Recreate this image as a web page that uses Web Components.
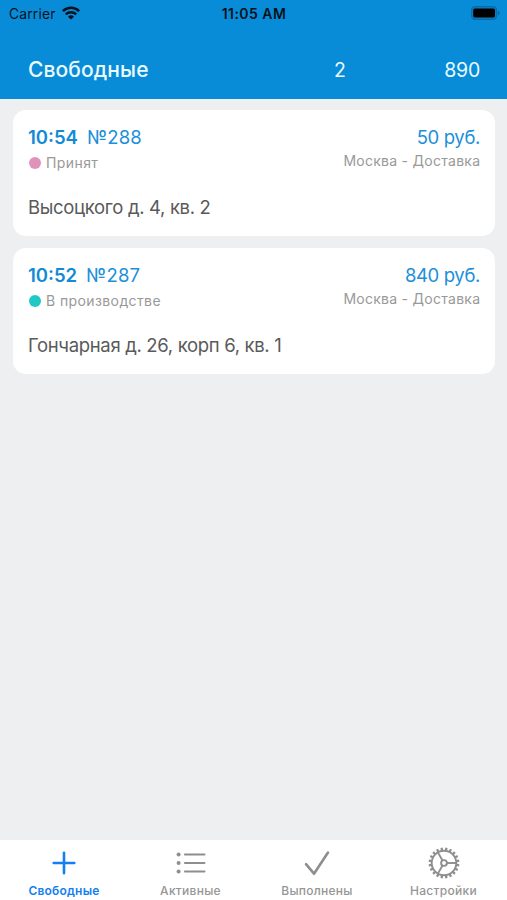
<!DOCTYPE html>
<html lang="ru">
<head>
<meta charset="utf-8">
<title>Свободные</title>
<style>
html,body{margin:0;height:100%;overflow:hidden}
body{font-family:Inter,"Liberation Sans",sans-serif;background:#edeff1}
</style>
</head>
<body>
<courier-app></courier-app>
<script>
const define = (name, html, setup) => {
  const tpl = document.createElement('template');
  tpl.innerHTML = html;
  customElements.define(name, class extends HTMLElement {
    constructor() {
      super();
      this.attachShadow({mode: 'open'}).append(tpl.content.cloneNode(true));
    }
    connectedCallback() { if (setup) setup(this.shadowRoot); }
  });
};

define('status-bar', `
<style>
:host{display:grid;grid-template-columns:1fr auto 1fr;align-items:center;height:28px;padding:0 7px 0 9px;color:#06121c;font-size:13.8px;line-height:28px}
.left{display:flex;align-items:center;gap:6px}
.carrier{letter-spacing:.2px}
.time{font-weight:600;font-size:14px;letter-spacing:.45px;margin-right:1px}
.right{justify-self:end;display:flex;margin-top:-2px}
svg{display:block}
.left svg{margin-top:-2px}
</style>
<div class="left"><span class="carrier">Carrier</span>
<svg width="18" height="14" viewBox="0 0 18 14" fill="none" stroke="#06121c" stroke-width="2.5"><path d="M.9 5.1a11.6 11.6 0 0 1 16.2 0"/><path d="M3.8 8.3a7.4 7.4 0 0 1 10.4 0"/><path d="M9 13.6 6 10.7a4.3 4.3 0 0 1 6 0z" fill="#06121c" stroke="none"/></svg></div>
<span class="time">11:05 AM</span>
<div class="right"><svg width="29" height="14" viewBox="0 0 29 14"><rect x=".6" y=".6" width="25" height="12.8" rx="3.6" fill="#0a7cc2" stroke="#0a6ba8" stroke-width="1.2"/><rect x="2.2" y="2.4" width="21.8" height="9.2" rx="1.8" fill="#000"/><path d="M27 4.8v4.4q1.6-.7 1.6-2.2T27 4.8z" fill="#0a6298"/></svg></div>`);

define('title-bar', `
<style>
:host{display:grid;grid-template-columns:1fr auto 134px;align-items:center;flex:1;padding:13px 27px 0 28px;color:#eafaff;font-size:20px;line-height:24px}
.title{font-size:21px;font-weight:500;letter-spacing:.1px}
.count{font-size:19.5px}
.sum{text-align:right;font-size:19.5px;letter-spacing:-.2px}
</style>
<span class="title"><slot></slot></span><span class="count"><slot name="count"></slot></span><span class="sum"><slot name="sum"></slot></span>`);

define('order-card', `
<style>
:host{display:flex;flex-direction:column;height:126px;box-sizing:border-box;padding:16.5px 15px 0;background:#fff;border-radius:13px;color:#5a5a5a}
.row{display:flex;justify-content:space-between}
.top{height:22px;line-height:22px;font-size:18.5px;color:#1c90d9}
.time{font-weight:600;margin-right:9px;color:#128ad6}
.num{letter-spacing:.15px}
.price{letter-spacing:-.35px}
.sub{height:24px;font-size:14px;line-height:20px;color:#999}
.status{display:flex;align-items:center;gap:5px;height:20px;margin-top:5px;letter-spacing:.4px}
.kind{margin-top:2.5px;line-height:20px;letter-spacing:.27px;margin-right:-.3px}
.dot{width:12px;height:12px;border-radius:50%;background:var(--dot);margin-left:1px}
.addr{font-size:18.5px;line-height:24px;margin-top:23.2px;white-space:nowrap;letter-spacing:-.33px}
</style>
<div class="row top"><div><span class="time"><slot name="time"></slot></span><span class="num"><slot name="num"></slot></span></div><span class="price"><slot name="price"></slot></span></div>
<div class="row sub"><span class="status"><i class="dot"></i><span><slot name="status"></slot></span></span><span class="kind"><slot name="kind"></slot></span></div>
<div class="addr"><slot></slot></div>`);

define('tab-item', `
<style>
:host{display:flex;flex-direction:column;align-items:center;color:#969696;font-size:12px;font-weight:500;line-height:16px;padding-top:7px;letter-spacing:.28px}
:host([active]){color:#147ff0;font-weight:600;letter-spacing:.2px}
.icon{height:32px;display:flex;align-items:center;margin-bottom:4px}
</style>
<span class="icon"><slot name="icon"></slot></span><span class="label"><slot></slot></span>`);

define('gear-icon', `
<style>:host{display:block;width:32px;height:32px}svg{display:block}</style>
<svg width="32" height="32" viewBox="-16 -16 32 32" fill="none" stroke="#8e8e8e" stroke-width="1.9"><circle r="12.3"/><circle r="2.9"/><g class="spokes"></g><g class="teeth" stroke-width="2.3"></g></svg>`,
root => {
  const line = (r1, r2, a) => `<path d="M${r1} 0H${r2}" transform="rotate(${a})"/>`;
  root.querySelector('.spokes').innerHTML = [0, 120, 240].map(a => line(3, 12, a)).join('');
  root.querySelector('.teeth').innerHTML = Array.from({length: 20}, (_, i) => line(12.6, 15.4, i * 18 + 9)).join('');
});

define('tab-bar', `
<style>:host{display:grid;grid-template-columns:repeat(4,126.5px);padding-left:.75px;height:60px;background:#fff;flex:none}</style><slot></slot>`);

define('courier-app', `
<style>
:host{display:flex;flex-direction:column;height:900px;width:507px;background:#edeff1}
header{background:#088cd8;height:98.5px;flex:none;display:flex;flex-direction:column}
main{flex:1;display:flex;flex-direction:column;gap:12px;padding:11.2px 12px 0 13px}
svg{display:block}
</style>
<header><status-bar></status-bar><title-bar>Свободные<span slot="count">2</span><span slot="sum">890</span></title-bar></header>
<main>
<order-card style="--dot:#df93bb"><span slot="time">10:54</span><span slot="num">№288</span><span slot="price">50 руб.</span><span slot="status">Принят</span><span slot="kind">Москва - Доставка</span>Высоцкого д. 4, кв. 2</order-card>
<order-card style="--dot:#22c9c4"><span slot="time">10:52</span><span slot="num">№287</span><span slot="price">840 руб.</span><span slot="status">В производстве</span><span slot="kind">Москва - Доставка</span>Гончарная д. 26, корп 6, кв. 1</order-card>
</main>
<tab-bar>
<tab-item active><svg slot="icon" width="24" height="24" viewBox="0 0 24 24" stroke="#147ff0" stroke-width="2.6" stroke-linecap="round"><path d="M12 1.7v20.6M1.7 12h20.6"/></svg>Свободные</tab-item>
<tab-item><svg slot="icon" width="30" height="22" viewBox="0 0 30 22" stroke="#8e8e8e" stroke-width="2.2" stroke-linecap="round"><path d="M9 2.5h19.4M9 11h19.4M9 19.5h19.4"/><g fill="#8e8e8e" stroke="none"><circle cx="2.6" cy="2.5" r="2"/><circle cx="2.6" cy="11" r="2"/><circle cx="2.6" cy="19.5" r="2"/></g></svg>Активные</tab-item>
<tab-item><svg slot="icon" width="26" height="26" viewBox="0 0 26 26" fill="none" stroke="#8e8e8e" stroke-width="2.6" stroke-linecap="round" stroke-linejoin="round"><path d="M2 14.2 10 23.7 24 2.5"/></svg>Выполнены</tab-item>
<tab-item><gear-icon slot="icon"></gear-icon>Настройки</tab-item>
</tab-bar>`);
</script>
</body>
</html>
